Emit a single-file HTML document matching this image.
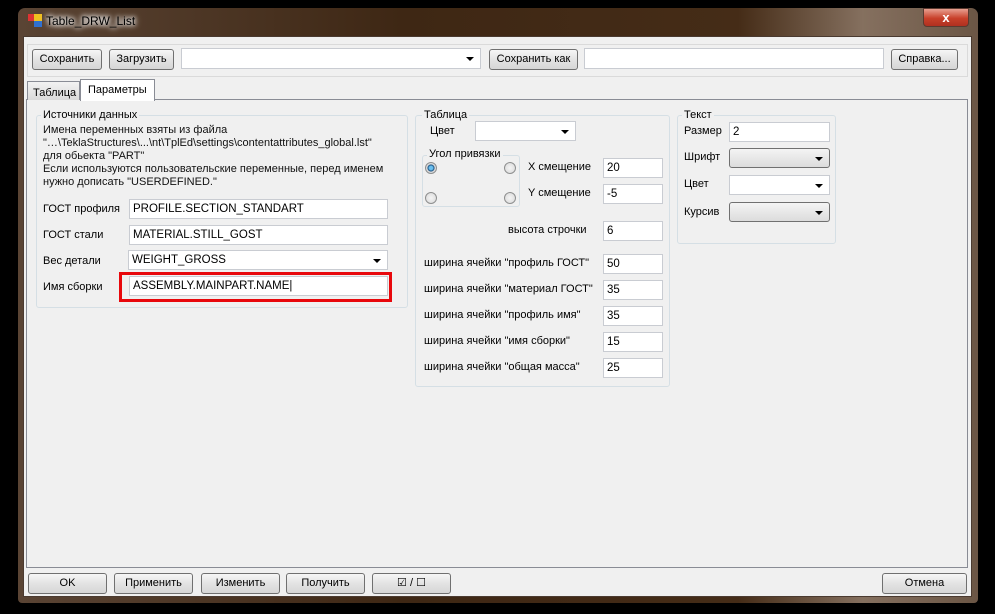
<!DOCTYPE html>
<html><head><meta charset="utf-8"><style>
*{box-sizing:border-box;margin:0;padding:0}
body{width:995px;height:614px;background:#000;position:relative;overflow:hidden;font-family:"Liberation Sans",sans-serif;font-size:11px;color:#000}
.a{position:absolute}
.btn{position:absolute;border:1px solid #707070;border-radius:3px;background:linear-gradient(#f6f6f6,#e3e3e3 50%,#d6d6d6);text-align:center;line-height:19px;font-size:11px}
.in{position:absolute;background:#fff;border:1px solid #c9ccd2;height:20px;padding-left:3px;line-height:18px;font-size:11.5px}
.cb{position:absolute;background:#fff;border:1px solid #c9ccd2;height:20px}
.cb:after{content:"";position:absolute;right:6px;top:8px;border-left:4px solid transparent;border-right:4px solid transparent;border-top:4px solid #000}
.cbg{position:absolute;border:1px solid #707070;border-radius:3px;height:20px;background:linear-gradient(#f4f4f4,#dcdcdc)}
.cbg:after{content:"";position:absolute;right:6px;top:8px;border-left:4px solid transparent;border-right:4px solid transparent;border-top:4px solid #000}
.grp{position:absolute;border:1px solid #d5dfe5;border-radius:3px}
.gl{position:absolute;top:-8px;left:6px;background:#f0f0f0;padding:0 2px;line-height:14px}
.rad{position:absolute;width:12px;height:12px;border-radius:50%;border:1px solid #8e8f8f;background:radial-gradient(#f4f4f4,#d8d8d8)}
</style></head><body>
<div class="a" style="left:18px;top:8px;width:960px;height:595px;border-radius:7px 7px 4px 4px;background:linear-gradient(90deg,#5a4434,#3e2714 40%,#452c17 75%,#85705f 88%,#6b5645)"></div>
<div class="a" style="left:28px;top:14px;width:7px;height:7px;background:#d33"></div>
<div class="a" style="left:34px;top:14px;width:8px;height:8px;background:#f0c020"></div>
<div class="a" style="left:34px;top:21px;width:8px;height:6px;background:#3070d0"></div>
<div class="a" style="left:46px;top:14px;color:#000;font-size:12px;text-shadow:0 0 8px #fff,0 0 6px #fff,0 0 4px #fff">Table_DRW_List</div>
<div class="a" style="left:923px;top:8px;width:46px;height:19px;border:1px solid #5a3a30;border-radius:0 0 4px 4px;background:linear-gradient(#e8a090,#c8402a 55%,#b03020);color:#fff;font-weight:bold;text-align:center;line-height:17px;font-size:13px">x</div>
<div class="a" style="left:23px;top:36px;width:949px;height:561px;background:#f0f0f0;border:1px solid #4a3a30"></div>
<div class="a" style="left:27px;top:44px;width:941px;height:33px;border:1px solid #dadada"></div>
<div class="btn" style="left:32px;top:49px;width:70px;height:21px">Сохранить</div>
<div class="btn" style="left:109px;top:49px;width:65px;height:21px">Загрузить</div>
<div class="cb" style="left:181px;top:48px;width:300px;height:21px"></div>
<div class="btn" style="left:489px;top:49px;width:89px;height:21px">Сохранить как</div>
<div class="in" style="left:584px;top:48px;width:300px;height:21px"></div>
<div class="btn" style="left:891px;top:49px;width:67px;height:21px">Справка...</div>
<div class="a" style="left:26px;top:99px;width:942px;height:469px;border:1px solid #898c95;background:#f0f0f0"></div>
<div class="a" style="left:27px;top:81px;width:53px;height:19px;border:1px solid #898c95;border-bottom:none;background:linear-gradient(#f2f2f2,#dadada);padding:4px 0 0 5px;line-height:14px">Таблица</div>
<div class="a" style="left:80px;top:79px;width:75px;height:22px;border:1px solid #898c95;border-bottom:none;background:#fff;padding:2px 0 0 7px;line-height:16px">Параметры</div>

<div class="grp" style="left:36px;top:115px;width:372px;height:193px"><span class="gl" style="left:4px">Источники данных</span></div>
<div class="a" style="left:43px;top:124px;line-height:13px;color:#111">Имена переменных взяты из файла<br>"…\TeklaStructures\...\nt\TplEd\settings\contentattributes_global.lst"<br>для обьекта "PART"<br>Если используются пользовательские переменные, перед именем<br>нужно дописать "USERDEFINED."</div>
<div class="a" style="left:43px;top:203px">ГОСТ профиля</div>
<div class="in" style="left:129px;top:199px;width:259px">PROFILE.SECTION_STANDART</div>
<div class="a" style="left:43px;top:229px">ГОСТ стали</div>
<div class="in" style="left:129px;top:225px;width:259px">MATERIAL.STILL_GOST</div>
<div class="a" style="left:43px;top:255px">Вес детали</div>
<div class="cb" style="left:128px;top:250px;width:260px;padding-left:3px;line-height:18px;font-size:11.5px">WEIGHT_GROSS</div>
<div class="a" style="left:43px;top:281px">Имя сборки</div>
<div class="a" style="left:119px;top:272px;width:273px;height:30px;border:3px solid #e8080c"></div>
<div class="in" style="left:129px;top:276px;width:259px">ASSEMBLY.MAINPART.NAME|</div>

<div class="grp" style="left:415px;top:115px;width:255px;height:272px"><span class="gl">Таблица</span></div>
<div class="a" style="left:430px;top:125px">Цвет</div>
<div class="cb" style="left:475px;top:121px;width:101px"></div>
<div class="grp" style="left:422px;top:155px;width:98px;height:52px"><span class="gl" style="left:4px;top:-9px">Угол привязки</span></div>
<div class="rad" style="left:425px;top:162px;background:radial-gradient(#6ac0f0 25%,#1a5080 45%,#ddd 55%)"></div>
<div class="rad" style="left:504px;top:162px"></div>
<div class="rad" style="left:425px;top:192px"></div>
<div class="rad" style="left:504px;top:192px"></div>
<div class="a" style="left:528px;top:161px">X смещение</div>
<div class="in" style="left:603px;top:158px;width:60px">20</div>
<div class="a" style="left:528px;top:187px">Y смещение</div>
<div class="in" style="left:603px;top:184px;width:60px">-5</div>
<div class="a" style="left:508px;top:224px">высота строчки</div>
<div class="in" style="left:603px;top:221px;width:60px">6</div>
<div class="a" style="left:424px;top:257px">ширина ячейки "профиль ГОСТ"</div>
<div class="in" style="left:603px;top:254px;width:60px">50</div>
<div class="a" style="left:424px;top:283px">ширина ячейки "материал ГОСТ"</div>
<div class="in" style="left:603px;top:280px;width:60px">35</div>
<div class="a" style="left:424px;top:309px">ширина ячейки "профиль имя"</div>
<div class="in" style="left:603px;top:306px;width:60px">35</div>
<div class="a" style="left:424px;top:335px">ширина ячейки "имя сборки"</div>
<div class="in" style="left:603px;top:332px;width:60px">15</div>
<div class="a" style="left:424px;top:361px">ширина ячейки "общая масса"</div>
<div class="in" style="left:603px;top:358px;width:60px">25</div>

<div class="grp" style="left:677px;top:115px;width:159px;height:129px"><span class="gl" style="left:4px">Текст</span></div>
<div class="a" style="left:684px;top:125px">Размер</div>
<div class="in" style="left:729px;top:122px;width:101px">2</div>
<div class="a" style="left:684px;top:151px">Шрифт</div>
<div class="cbg" style="left:729px;top:148px;width:101px"></div>
<div class="a" style="left:684px;top:178px">Цвет</div>
<div class="cb" style="left:729px;top:175px;width:101px"></div>
<div class="a" style="left:684px;top:206px">Курсив</div>
<div class="cbg" style="left:729px;top:202px;width:101px"></div>

<div class="btn" style="left:28px;top:573px;width:79px;height:21px">OK</div>
<div class="btn" style="left:114px;top:573px;width:79px;height:21px">Применить</div>
<div class="btn" style="left:201px;top:573px;width:79px;height:21px">Изменить</div>
<div class="btn" style="left:286px;top:573px;width:79px;height:21px">Получить</div>
<div class="btn" style="left:372px;top:573px;width:79px;height:21px">☑ / ☐</div>
<div class="btn" style="left:882px;top:573px;width:85px;height:21px">Отмена</div>
</body></html>
